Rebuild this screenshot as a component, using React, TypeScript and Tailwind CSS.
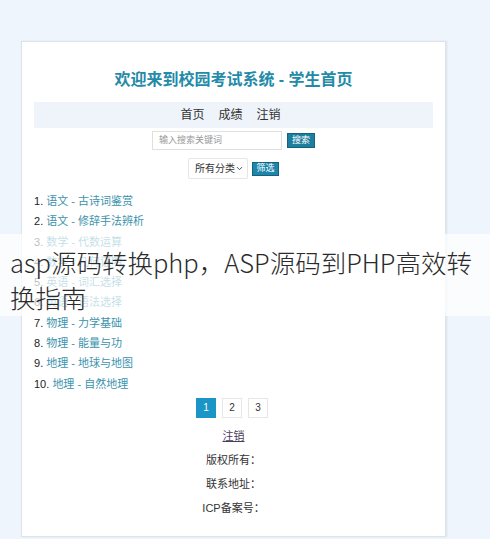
import { ChevronDown } from 'lucide-react';

const items = [
  '语文 - 古诗词鉴赏',
  '语文 - 修辞手法辨析',
  '数学 - 代数运算',
  '数学 - 几何证明',
  '英语 - 词汇选择',
  '英语 - 语法选择',
  '物理 - 力学基础',
  '物理 - 能量与功',
  '地理 - 地球与地图',
  '地理 - 自然地理',
];

const font = { fontFamily: '"Liberation Sans", "Noto Sans CJK SC", sans-serif' };

export default function App() {
  return (
    <div className="relative w-[490px] h-[539px] overflow-hidden bg-[#eef5fc] pt-[41px] pl-[21px]" style={font}>
      <div className="w-[425px] h-[496px] bg-white border border-[#dde3e9] shadow-[1px_0_2px_rgba(0,0,0,0.08)] px-[12px]">
        <h1 className="pt-[29px] text-center text-[16px] leading-[18px] font-bold text-[#238aa7]">
          欢迎来到校园考试系统 - 学生首页
        </h1>

        <nav className="mt-[13px] h-[26px] bg-[#eef4fa] flex justify-center items-center gap-[14px] pr-[6px] text-[12px] text-[#333]">
          <a>首页</a>
          <a>成绩</a>
          <a>注销</a>
        </nav>

        <div className="mt-[3px] flex justify-center items-center gap-[5px]">
          <div className="w-[130px] h-[19px] border border-[#e0e0e0] flex items-center px-[6px] text-[9px] text-[#999]">
            输入搜索关键词
          </div>
          <button className="w-[28px] h-[15px] bg-[#1d7fa0] border border-[#16627c] text-white text-[9px] leading-none">
            搜索
          </button>
        </div>

        <div className="mt-[8px] flex justify-center items-center gap-[4px]">
          <div className="w-[60px] h-[21px] border border-[#e6e6e6] rounded-[2px] flex items-center justify-between pl-[6px] pr-[3px] text-[10px] text-[#333]">
            <span>所有分类</span>
            <ChevronDown size={9} strokeWidth={2.5} className="text-[#444]" />
          </div>
          <button className="w-[27px] h-[14px] bg-[#1d86aa] border border-[#16627c] text-white text-[9px] leading-none">
            筛选
          </button>
        </div>

        <ol className="mt-[12px]">
          {items.map((t, i) => (
            <li key={t} className="text-[11px] leading-[20.3px] text-[#222]">
              {i + 1}. <a className="text-[#3c93ad]">{t}</a>
            </li>
          ))}
        </ol>

        <div className="mt-[4px] flex justify-center gap-[6px] pr-[3px]">
          {[1, 2, 3].map((n) => (
            <span
              key={n}
              className={
                n === 1
                  ? 'w-[20px] h-[20px] flex items-center justify-center text-[10px] bg-[#1a95c5] text-white'
                  : 'w-[20px] h-[20px] flex items-center justify-center text-[10px] border border-[#e6e6e6] text-[#333]'
              }
            >
              {n}
            </span>
          ))}
        </div>

        <div className="mt-[6px] text-center text-[11px] leading-[24px] text-[#333]">
          <a className="underline text-[#4b3b5c]">注销</a>
          <p>版权所有：</p>
          <p>联系地址：</p>
          <p>ICP备案号：</p>
        </div>
      </div>

      <div
        className="absolute left-0 top-[234px] w-[490px] h-[82px] bg-white/70 px-[10px] pt-[10px] text-[25.5px] leading-[35px] font-light text-[#2b2b2b]"
        style={{ fontFamily: '"Noto Sans CJK SC", sans-serif' }}
      >
        asp源码转换php，ASP源码到PHP高效转换指南
      </div>
    </div>
  );
}
